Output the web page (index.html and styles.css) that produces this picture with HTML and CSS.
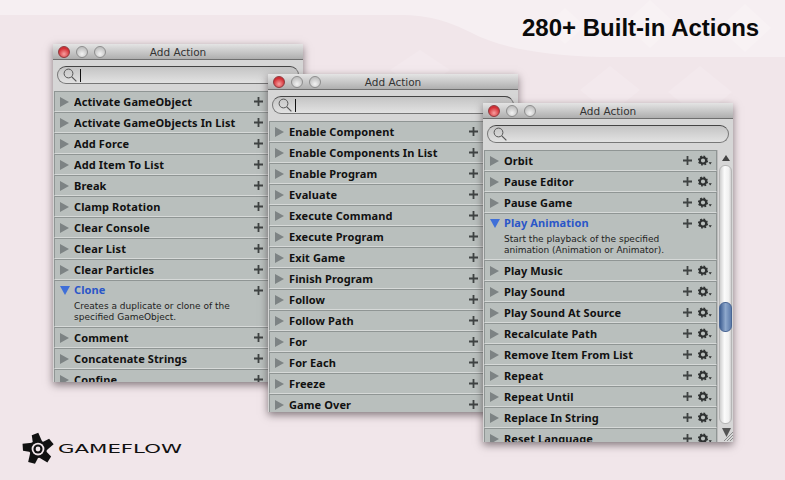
FILE: index.html
```html
<!DOCTYPE html>
<html lang="en">
<head>
<meta charset="utf-8">
<title>GameFlow - 280+ Built-in Actions</title>
<link rel="stylesheet" href="styles.css">
</head>
<body>
<svg width="0" height="0" class="defs">
  <defs>
    <symbol id="gear" viewBox="0 0 14 11">
      <circle cx="5" cy="5.5" r="3.1" fill="none" stroke="#2e3131" stroke-width="2"/>
      <circle cx="5" cy="5.5" r="4.4" fill="none" stroke="#2e3131" stroke-width="1.4" stroke-dasharray="1.75 1.7"/>
      <path d="M10.6 7.2h3.2l-1.6 2.4z" fill="#2e3131"/>
    </symbol>
    <symbol id="plus" viewBox="0 0 9 9">
      <path d="M3.6 0h1.8v3.6H9v1.8H5.4V9H3.6V5.4H0V3.6h3.6z" fill="#3f4343"/>
    </symbol>
    <symbol id="closed" viewBox="0 0 9 10">
      <path d="M0 0l9 5-9 5z" fill="#7d8384"/>
    </symbol>
    <symbol id="open" viewBox="0 0 10 9">
      <path d="M0 0h10L5 9z" fill="#3f6fd8"/>
    </symbol>
    <symbol id="lens" viewBox="0 0 14 14">
      <circle cx="5.5" cy="5.5" r="4.4" fill="none" stroke="#555" stroke-width="1"/>
      <path d="M8.8 8.8l4.6 4.6" stroke="#555" stroke-width="1.2"/>
    </symbol>
  </defs>
</svg>

<main class="stage">
  <svg class="backdrop" viewBox="0 0 785 480" preserveAspectRatio="none" aria-hidden="true">
    <path d="M0 0H785V57H600C540 55 500 48 470 32 450 22 430 15 400 15H0z" fill="#f6eff2"/>
    <path d="M650 0l26 24-26 24-26-24zM745 4l26 24-26 24-26-24zM565 8l20 18-20 18-20-18z" fill="#f8f2f4"/>
    <path d="M610 66l30 24-30 24-30-24zM700 66l32 26-32 26-32-26zM420 50l30 20-30 20-30-20z" fill="#f3e9ed"/>
  </svg>

  <h1 class="headline">280+ Built-in Actions</h1>

  <section class="window win-one">
    <header class="titlebar">
      <span class="light red"></span><span class="light"></span><span class="light"></span>
      <span class="wintitle">Add Action</span>
    </header>
    <div class="searchbar"><div class="pill"><svg class="lens"><use href="#lens"/></svg><span class="caret"></span></div></div>
    <div class="content">
      <ul class="rows">
        <li class="row"><svg class="tri"><use href="#closed"/></svg><span class="name">Activate GameObject</span><svg class="plus"><use href="#plus"/></svg></li>
        <li class="row"><svg class="tri"><use href="#closed"/></svg><span class="name">Activate GameObjects In List</span><svg class="plus"><use href="#plus"/></svg></li>
        <li class="row"><svg class="tri"><use href="#closed"/></svg><span class="name">Add Force</span><svg class="plus"><use href="#plus"/></svg></li>
        <li class="row"><svg class="tri"><use href="#closed"/></svg><span class="name">Add Item To List</span><svg class="plus"><use href="#plus"/></svg></li>
        <li class="row"><svg class="tri"><use href="#closed"/></svg><span class="name">Break</span><svg class="plus"><use href="#plus"/></svg></li>
        <li class="row"><svg class="tri"><use href="#closed"/></svg><span class="name">Clamp Rotation</span><svg class="plus"><use href="#plus"/></svg></li>
        <li class="row"><svg class="tri"><use href="#closed"/></svg><span class="name">Clear Console</span><svg class="plus"><use href="#plus"/></svg></li>
        <li class="row"><svg class="tri"><use href="#closed"/></svg><span class="name">Clear List</span><svg class="plus"><use href="#plus"/></svg></li>
        <li class="row"><svg class="tri"><use href="#closed"/></svg><span class="name">Clear Particles</span><svg class="plus"><use href="#plus"/></svg></li>
        <li class="row expanded"><div class="rowhead"><svg class="tri-open"><use href="#open"/></svg><span class="name">Clone</span><svg class="plus"><use href="#plus"/></svg></div><p class="desc">Creates a duplicate or clone of the<br>specified GameObject.</p></li>
        <li class="row"><svg class="tri"><use href="#closed"/></svg><span class="name">Comment</span><svg class="plus"><use href="#plus"/></svg></li>
        <li class="row"><svg class="tri"><use href="#closed"/></svg><span class="name">Concatenate Strings</span><svg class="plus"><use href="#plus"/></svg></li>
        <li class="row"><svg class="tri"><use href="#closed"/></svg><span class="name">Confine</span><svg class="plus"><use href="#plus"/></svg></li>
      </ul>
    </div>
  </section>

  <section class="window win-two">
    <header class="titlebar">
      <span class="light red"></span><span class="light"></span><span class="light"></span>
      <span class="wintitle">Add Action</span>
    </header>
    <div class="searchbar"><div class="pill"><svg class="lens"><use href="#lens"/></svg><span class="caret"></span></div></div>
    <div class="content">
      <ul class="rows">
        <li class="row"><svg class="tri"><use href="#closed"/></svg><span class="name">Enable Component</span><svg class="plus"><use href="#plus"/></svg></li>
        <li class="row"><svg class="tri"><use href="#closed"/></svg><span class="name">Enable Components In List</span><svg class="plus"><use href="#plus"/></svg></li>
        <li class="row"><svg class="tri"><use href="#closed"/></svg><span class="name">Enable Program</span><svg class="plus"><use href="#plus"/></svg></li>
        <li class="row"><svg class="tri"><use href="#closed"/></svg><span class="name">Evaluate</span><svg class="plus"><use href="#plus"/></svg></li>
        <li class="row"><svg class="tri"><use href="#closed"/></svg><span class="name">Execute Command</span><svg class="plus"><use href="#plus"/></svg></li>
        <li class="row"><svg class="tri"><use href="#closed"/></svg><span class="name">Execute Program</span><svg class="plus"><use href="#plus"/></svg></li>
        <li class="row"><svg class="tri"><use href="#closed"/></svg><span class="name">Exit Game</span><svg class="plus"><use href="#plus"/></svg></li>
        <li class="row"><svg class="tri"><use href="#closed"/></svg><span class="name">Finish Program</span><svg class="plus"><use href="#plus"/></svg></li>
        <li class="row"><svg class="tri"><use href="#closed"/></svg><span class="name">Follow</span><svg class="plus"><use href="#plus"/></svg></li>
        <li class="row"><svg class="tri"><use href="#closed"/></svg><span class="name">Follow Path</span><svg class="plus"><use href="#plus"/></svg></li>
        <li class="row"><svg class="tri"><use href="#closed"/></svg><span class="name">For</span><svg class="plus"><use href="#plus"/></svg></li>
        <li class="row"><svg class="tri"><use href="#closed"/></svg><span class="name">For Each</span><svg class="plus"><use href="#plus"/></svg></li>
        <li class="row"><svg class="tri"><use href="#closed"/></svg><span class="name">Freeze</span><svg class="plus"><use href="#plus"/></svg></li>
        <li class="row"><svg class="tri"><use href="#closed"/></svg><span class="name">Game Over</span><svg class="plus"><use href="#plus"/></svg></li>
      </ul>
    </div>
  </section>

  <section class="window win-three">
    <header class="titlebar">
      <span class="light red"></span><span class="light"></span><span class="light"></span>
      <span class="wintitle">Add Action</span>
    </header>
    <div class="searchbar"><div class="pill"><svg class="lens"><use href="#lens"/></svg></div></div>
    <div class="content with-scroll">
      <ul class="rows">
        <li class="row"><svg class="tri"><use href="#closed"/></svg><span class="name">Orbit</span><svg class="plus"><use href="#plus"/></svg><svg class="gear"><use href="#gear"/></svg></li>
        <li class="row"><svg class="tri"><use href="#closed"/></svg><span class="name">Pause Editor</span><svg class="plus"><use href="#plus"/></svg><svg class="gear"><use href="#gear"/></svg></li>
        <li class="row"><svg class="tri"><use href="#closed"/></svg><span class="name">Pause Game</span><svg class="plus"><use href="#plus"/></svg><svg class="gear"><use href="#gear"/></svg></li>
        <li class="row expanded"><div class="rowhead"><svg class="tri-open"><use href="#open"/></svg><span class="name">Play Animation</span><svg class="plus"><use href="#plus"/></svg><svg class="gear"><use href="#gear"/></svg></div><p class="desc">Start the playback of the specified<br>animation (Animation or Animator).</p></li>
        <li class="row"><svg class="tri"><use href="#closed"/></svg><span class="name">Play Music</span><svg class="plus"><use href="#plus"/></svg><svg class="gear"><use href="#gear"/></svg></li>
        <li class="row"><svg class="tri"><use href="#closed"/></svg><span class="name">Play Sound</span><svg class="plus"><use href="#plus"/></svg><svg class="gear"><use href="#gear"/></svg></li>
        <li class="row"><svg class="tri"><use href="#closed"/></svg><span class="name">Play Sound At Source</span><svg class="plus"><use href="#plus"/></svg><svg class="gear"><use href="#gear"/></svg></li>
        <li class="row"><svg class="tri"><use href="#closed"/></svg><span class="name">Recalculate Path</span><svg class="plus"><use href="#plus"/></svg><svg class="gear"><use href="#gear"/></svg></li>
        <li class="row"><svg class="tri"><use href="#closed"/></svg><span class="name">Remove Item From List</span><svg class="plus"><use href="#plus"/></svg><svg class="gear"><use href="#gear"/></svg></li>
        <li class="row"><svg class="tri"><use href="#closed"/></svg><span class="name">Repeat</span><svg class="plus"><use href="#plus"/></svg><svg class="gear"><use href="#gear"/></svg></li>
        <li class="row"><svg class="tri"><use href="#closed"/></svg><span class="name">Repeat Until</span><svg class="plus"><use href="#plus"/></svg><svg class="gear"><use href="#gear"/></svg></li>
        <li class="row"><svg class="tri"><use href="#closed"/></svg><span class="name">Replace In String</span><svg class="plus"><use href="#plus"/></svg><svg class="gear"><use href="#gear"/></svg></li>
        <li class="row"><svg class="tri"><use href="#closed"/></svg><span class="name">Reset Language</span><svg class="plus"><use href="#plus"/></svg><svg class="gear"><use href="#gear"/></svg></li>
      </ul>
      <div class="scrollbar">
        <svg class="arrow" viewBox="0 0 8 6"><path d="M4 0l4 6H0z" fill="#444"/></svg>
        <div class="track"><div class="thumb"></div></div>
        <svg class="grip" viewBox="0 0 16 16">
          <path d="M4 2h9L8.5 11z" fill="#555"/>
          <path d="M15 6L6 15M15 9l-6 6M15 12l-3 3" stroke="#8b8b8b" stroke-width="1"/>
        </svg>
      </div>
    </div>
  </section>

  <footer class="brand">
    <svg class="brandmark" viewBox="-20 -20 40 40" aria-hidden="true">
      <g fill="#111">
        <circle r="10.5"/>
        <path d="M-5-8V-17L3-19 6-8z" transform="rotate(-8)"/>
        <path d="M-5-8V-17L3-19 6-8z" transform="rotate(64)"/>
        <path d="M-5-8V-17L3-19 6-8z" transform="rotate(136)"/>
        <path d="M-5-8V-17L3-19 6-8z" transform="rotate(208)"/>
        <path d="M-5-8V-17L3-19 6-8z" transform="rotate(280)"/>
      </g>
      <circle r="7.5" fill="#f1e6ea"/>
      <circle r="5.4" fill="#111"/>
      <circle r="2.8" fill="#f1e6ea"/>
    </svg>
    <span class="brandname">GAMEFLOW</span>
  </footer>
</main>
</body>
</html>
```

FILE: styles.css
```css
* { box-sizing: border-box; }
html, body { margin: 0; padding: 0; }
body { width: 785px; height: 480px; overflow: hidden; background: #f1e6ea; font-family: "DejaVu Sans", Verdana, sans-serif; }
.defs { position: absolute; }
.stage { position: relative; width: 785px; height: 480px; overflow: hidden; }
.backdrop { position: absolute; inset: 0; width: 785px; height: 480px; }
.headline { position: absolute; top: 15px; left: 522px; margin: 0; font: 700 24px/26px "Liberation Sans", Arial, sans-serif; color: #0a0a0a; white-space: nowrap; }

.window { position: absolute; width: 250px; height: 338px; display: flex; flex-direction: column; background: #d4d4d4; box-shadow: 0 3px 8px rgba(40, 30, 35, .55); overflow: hidden; }
.win-one { left: 53px; top: 44px; }
.win-two { left: 268px; top: 74px; }
.win-three { left: 483px; top: 103px; height: 339px; }

.titlebar { position: relative; flex: none; height: 16px; display: flex; align-items: center; gap: 6px; padding-left: 5px; background: linear-gradient(#e4e4e4, #aeaeae); border-bottom: 1px solid #6f6f6f; }
.light { width: 12px; height: 12px; border-radius: 50%; background: radial-gradient(circle at 50% 70%, #f2f2f2, #c2c2c2 70%); border: 1px solid #8d8d8d; }
.light.red { background: radial-gradient(circle at 50% 70%, #f8a0a0, #d32f35 65%); border-color: #8e3a3e; }
.wintitle { position: absolute; left: 0; right: 0; top: 0; text-align: center; font-size: 10.5px; line-height: 17px; color: #333; }

.searchbar { flex: none; height: 31px; padding: 6px 4px 0; background: #d6d6d6; }
.pill { height: 18px; display: flex; align-items: center; gap: 3px; padding-left: 5px; border: 1px solid #777; border-top-color: #444; border-radius: 9px; background: linear-gradient(#c4c4c4, #e2e2e2); }
.lens { width: 14px; height: 14px; }
.caret { width: 1px; height: 13px; background: #111; }

.content { flex: 1; min-height: 0; overflow: hidden; display: flex; }
.rows { flex: 1; min-width: 0; margin: 0; padding: 0 1px 0 1px; list-style: none; display: flex; flex-direction: column; }
.row { flex: none; height: 21px; display: flex; align-items: center; padding: 0 38px 0 5px; background: #b9bfbd; border-top: 1px solid #8f9594; border-bottom: 1px solid #d6d9d8; border-left: 1px solid #8f9594; border-right: 1px solid #8f9594; }
.row.expanded { height: 47px; display: block; }
.rowhead { height: 18px; display: flex; align-items: center; }
.tri { flex: none; width: 9px; height: 10px; margin-right: 5px; }
.tri-open { flex: none; width: 10px; height: 9px; margin-right: 4px; }
.name { flex: 1; min-width: 0; font: 700 11px/14px "Noto Sans", "DejaVu Sans", sans-serif; letter-spacing: .1px; color: #111; white-space: nowrap; overflow: hidden; }
.expanded .name { color: #2a56c8; }
.plus { flex: none; width: 9px; height: 9px; }
.gear { flex: none; width: 14px; height: 11px; margin-left: 6px; }
.desc { margin: 2px 0 0 14px; font-size: 9px; line-height: 11px; color: #222; white-space: nowrap; }

.with-scroll .rows { padding-right: 0; }
.with-scroll .row { padding-right: 4px; }
.scrollbar { flex: none; width: 16px; display: flex; flex-direction: column; align-items: center; background: #d6d6d6; border-left: 1px solid #bbb; }
.arrow { flex: none; width: 8px; height: 6px; margin: 5px 0 4px; }
.track { position: relative; flex: 1; width: 13px; border-radius: 6px; background: linear-gradient(90deg, #cfcfcf, #fbfbfb 40%, #f0f0f0 80%, #cfcfcf); border: 1px solid #b5b5b5; }
.thumb { position: absolute; left: -1px; top: 136px; width: 13px; height: 30px; border-radius: 6px; background: linear-gradient(90deg, #3f5f92, #8ea8cc 50%, #5d7cab); border: 1px solid #4a6694; }
.grip { flex: none; width: 16px; height: 16px; margin-top: 2px; }

.brand { position: absolute; left: 21px; top: 432px; display: flex; align-items: center; gap: 3px; }
.brandmark { width: 34px; height: 34px; }
.brandname { display: block; width: 122px; font: 400 11.5px/16px "DejaVu Sans", sans-serif; color: #111; transform: scaleX(1.85); transform-origin: left center; }
```
